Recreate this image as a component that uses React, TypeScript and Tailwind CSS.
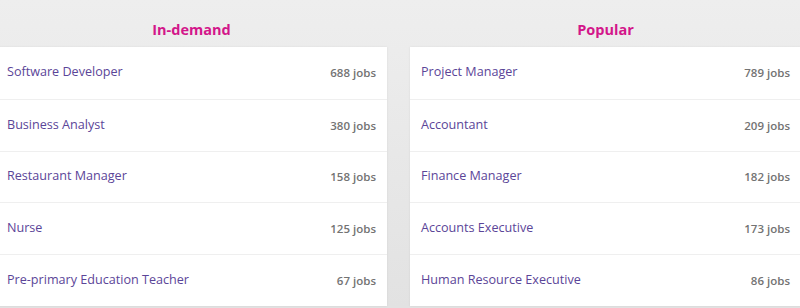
const inDemand = [
  { title: 'Software Developer', jobs: 688 },
  { title: 'Business Analyst', jobs: 380 },
  { title: 'Restaurant Manager', jobs: 158 },
  { title: 'Nurse', jobs: 125 },
  { title: 'Pre-primary Education Teacher', jobs: 67 },
]

const popular = [
  { title: 'Project Manager', jobs: 789 },
  { title: 'Accountant', jobs: 209 },
  { title: 'Finance Manager', jobs: 182 },
  { title: 'Accounts Executive', jobs: 173 },
  { title: 'Human Resource Executive', jobs: 86 },
]

function JobColumn({ heading, items }: { heading: string; items: { title: string; jobs: number }[] }) {
  return (
    <div className="w-[391px] shrink-0">
      <h2 className="h-[47px] pt-[19px] text-center text-[14.5px] font-bold leading-[22px] text-[#d3168a]">
        {heading}
      </h2>
      <ul className="bg-white shadow-[0_0_2px_rgba(0,0,0,0.08)]">
        {items.map((item, i) => (
          <li
            key={item.title}
            className={`flex h-[51.75px] items-center justify-between px-[11px] ${i > 0 ? 'border-t border-[#efefef]' : ''}`}
          >
            <span className="text-[12.6px] text-[#5b4598]">{item.title}</span>
            <span className="text-[11.5px] font-semibold text-[#737373]">{item.jobs} jobs</span>
          </li>
        ))}
      </ul>
    </div>
  )
}

export default function App() {
  return (
    <div
      className="h-[308px] w-[800px] overflow-hidden bg-gradient-to-b from-[#eeeeee] to-[#e2e2e2]"
      style={{ fontFamily: '"Open Sans", "Liberation Sans", sans-serif' }}
    >
      <div className="-ml-[4px] flex w-[805px] gap-[23px]">
        <JobColumn heading="In-demand" items={inDemand} />
        <JobColumn heading="Popular" items={popular} />
      </div>
    </div>
  )
}
